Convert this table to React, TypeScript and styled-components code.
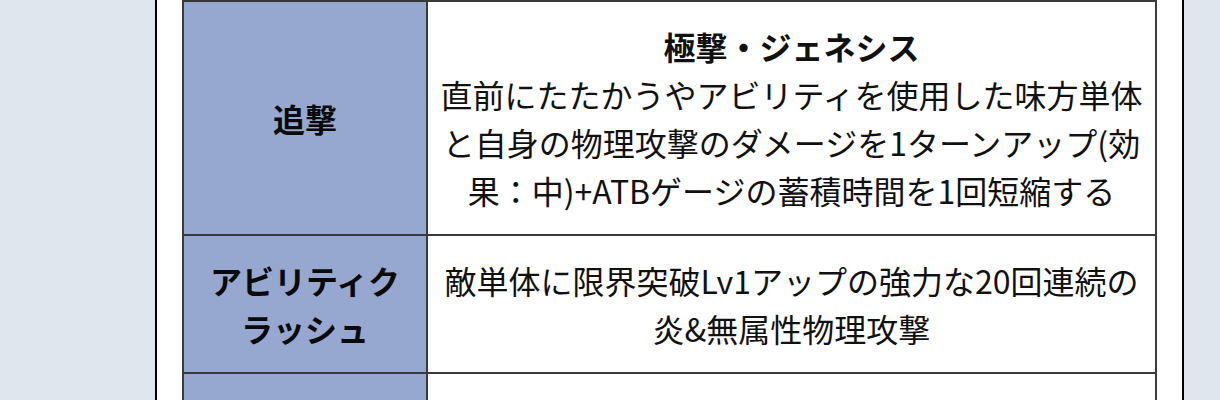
import React from "react";
import styled, { createGlobalStyle } from "styled-components";

const GlobalStyle = createGlobalStyle`
  html, body {
    margin: 0;
    padding: 0;
    background: #dfe6ee;
    overflow: hidden;
  }
  * { box-sizing: border-box; }
`;

const Page = styled.div`
  height: 400px;
  overflow: hidden;
  padding-left: 155px;
  font-family: "Noto Sans CJK JP", "Noto Sans", sans-serif;
  color: #111;
`;

const Panel = styled.div`
  width: 1029px;
  min-height: 400px;
  background: #ffffff;
  border-left: 2px solid #000;
  border-right: 2px solid #000;
  padding: 0 25px;
`;

const Table = styled.div`
  width: 975px;
  border-top: 2px solid #3a3a3c;
  border-left: 2px solid #3a3a3c;
`;

const Row = styled.div`
  display: grid;
  grid-template-columns: 244px 1fr;
`;

const Cell = styled.div<{ $head?: boolean }>`
  display: flex;
  flex-direction: column;
  align-items: center;
  justify-content: center;
  text-align: center;
  border-right: 2px solid #3a3a3c;
  border-bottom: 2px solid #3a3a3c;
  padding: 20px ${(p) => (p.$head ? "16px" : "10px")};
  font-size: 32px;
  line-height: 48px;
  font-weight: ${(p) => (p.$head ? 700 : 400)};
  background: ${(p) => (p.$head ? "#97a8d0" : "#ffffff")};
  color: ${(p) => (p.$head ? "#0a0a0a" : "#111")};
  word-break: normal;
  line-break: strict;
`;

const Text = styled.div`
  width: 100%;
`;

const Title = styled.div`
  font-weight: 700;
`;

const rows = [
  {
    head: "追撃",
    title: "極撃・ジェネシス",
    body: "直前にたたかうやアビリティを使用した味方単体と自身の物理攻撃のダメージを1ターンアップ(効果：中)+ATBゲージの蓄積時間を1回短縮する",
  },
  {
    head: "アビリティクラッシュ",
    body: "敵単体に限界突破Lv1アップの強力な20回連続の炎&無属性物理攻撃",
  },
  { head: "", body: "" },
];

export default function App() {
  return (
    <>
      <GlobalStyle />
      <Page>
        <Panel>
          <Table>
            {rows.map((r, i) => (
              <Row key={i}>
                <Cell $head>
                  <Text>{r.head || "\u00a0"}</Text>
                </Cell>
                <Cell>
                  <Text>
                    {r.title && <Title>{r.title}</Title>}
                    {r.body || "\u00a0"}
                  </Text>
                </Cell>
              </Row>
            ))}
          </Table>
        </Panel>
      </Page>
    </>
  );
}
